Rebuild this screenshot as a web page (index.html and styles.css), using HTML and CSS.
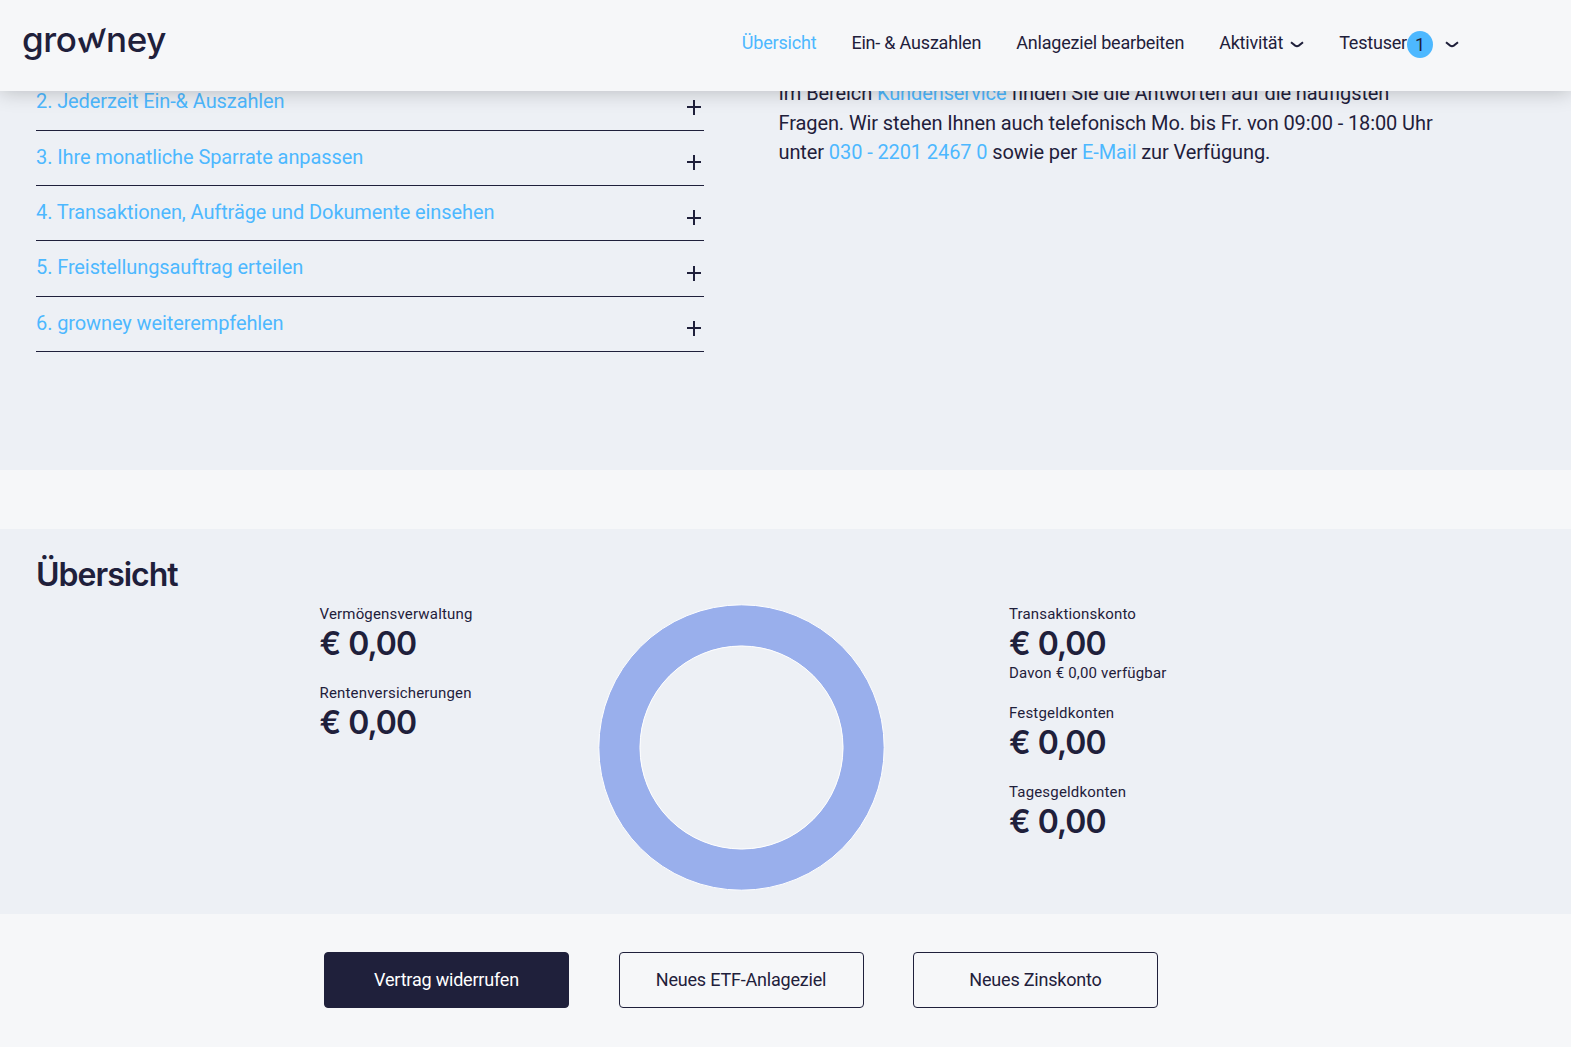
FILE: index.html
```html
<!DOCTYPE html>
<html lang="de">
<head>
<meta charset="utf-8">
<title>growney</title>
<link rel="stylesheet" href="styles.css">
</head>
<body>
<header class="header">
  <a class="logo">gro<span class="logo-w">w</span>ney</a>
  <nav class="nav">
    <a class="nav-item active">Übersicht</a>
    <a class="nav-item">Ein- &amp; Auszahlen</a>
    <a class="nav-item">Anlageziel bearbeiten</a>
    <a class="nav-item">Aktivität<svg class="chevron" viewBox="0 0 14 8"><path d="M1 1.3L5.2 4.6Q7 5.8 8.8 4.6L13 1.3"/></svg></a>
    <a class="nav-item">Testuser<span class="badge">1</span><svg class="chevron user" viewBox="0 0 14 8"><path d="M1 1.3L5.2 4.6Q7 5.8 8.8 4.6L13 1.3"/></svg></a>
  </nav>
</header>
<section class="help">
  <ul class="faq">
    <li><a>2. Jederzeit Ein-&amp; Auszahlen</a><i class="plus"></i></li>
    <li><a>3. Ihre monatliche Sparrate anpassen</a><i class="plus"></i></li>
    <li><a>4. Transaktionen, Aufträge und Dokumente einsehen</a><i class="plus"></i></li>
    <li><a>5. Freistellungsauftrag erteilen</a><i class="plus"></i></li>
    <li><a>6. growney weiterempfehlen</a><i class="plus"></i></li>
  </ul>
  <p class="contact">Im Bereich <a>Kundenservice</a> finden Sie die Antworten auf die häufigsten<br>Fragen. Wir stehen Ihnen auch telefonisch Mo. bis Fr. von 09:00 - 18:00 Uhr<br>unter <a>030 - 2201 2467 0</a> sowie per <a>E-Mail</a> zur Verfügung.</p>
</section>
<section class="overview">
  <h2>Übersicht</h2>
  <div class="overview-grid">
    <div class="accounts">
      <div class="account"><span>Vermögensverwaltung</span><strong>€ 0,00</strong></div>
      <div class="account"><span>Rentenversicherungen</span><strong>€ 0,00</strong></div>
    </div>
    <svg class="donut" viewBox="0 0 287 287"><circle class="ring" cx="143.5" cy="143.5" r="122.2"/><circle class="edge" cx="143.5" cy="143.5" r="142.7"/><circle class="edge" cx="143.5" cy="143.5" r="101.5"/></svg>
    <div class="accounts">
      <div class="account with-note"><span>Transaktionskonto</span><strong>€ 0,00</strong><span>Davon € 0,00 verfügbar</span></div>
      <div class="account"><span>Festgeldkonten</span><strong>€ 0,00</strong></div>
      <div class="account"><span>Tagesgeldkonten</span><strong>€ 0,00</strong></div>
    </div>
  </div>
</section>
<div class="actions">
  <button class="btn primary">Vertrag widerrufen</button>
  <button class="btn">Neues ETF-Anlageziel</button>
  <button class="btn">Neues Zinskonto</button>
</div>
</body>
</html>
```
FILE: styles.css
```css
* { box-sizing: border-box; }
body {
  margin: 0;
  height: 1047px;
  overflow: hidden;
  background: #f6f7f9;
  color: #1f203b;
  font-family: Roboto, sans-serif;
  font-size: 20px;
}
.header {
  position: relative;
  z-index: 2;
  display: flex;
  justify-content: space-between;
  height: 91px;
  padding: 0 112px 0 22px;
  background: #f6f7f9;
  box-shadow: 0 0 20px rgba(0, 0, 0, .24);
}
.logo {
  padding-top: 18px;
  font: 500 35px/42px Inter, sans-serif;
  letter-spacing: -.4px;
}
.logo-w {
  display: inline-block;
  width: 29.5px;
  font-size: 31px;
  font-weight: 540;
  line-height: 20px;
  transform: translateY(-2px) skewY(-21deg) scaleX(1.16);
  transform-origin: 50% 60%;
  text-align: center;
}
.nav {
  display: flex;
  gap: 35px;
  height: 85px;
  align-items: center;
  font-size: 18px;
  letter-spacing: -.2px;
}
.nav-item { display: flex; align-items: center; }
.active { color: #4db8ff; }
.chevron {
  width: 14px;
  height: 8px;
  margin: 4px 0 0 7px;
  fill: none;
  stroke: #1f203b;
  stroke-width: 2;
}
.chevron.user { margin-left: 12px; }
.badge {
  width: 26px;
  height: 27px;
  margin-top: 4px;
  border-radius: 50%;
  background: #4db8ff;
  line-height: 28px;
  text-align: center;
}
.help {
  display: grid;
  grid-template-columns: 668px 1fr;
  column-gap: 74.5px;
  height: 395px;
  margin-top: -16px;
  padding: .4px 36px 0 36px;
  background: #edf0f5;
  letter-spacing: -.1px;
}
.faq { margin: 0; padding: 0; list-style: none; }
.faq li {
  display: flex;
  justify-content: space-between;
  height: 55.33px;
  padding: 12px 3px 0 0;
  border-bottom: 1px solid #1f203b;
  line-height: 29.5px;
}
.help a { color: #4db8ff; }
.plus {
  width: 14px;
  height: 15px;
  margin-top: 12.4px;
  background:
    linear-gradient(#1f203b, #1f203b) center / 2.4px 100% no-repeat,
    linear-gradient(#1f203b, #1f203b) center / 100% 2.4px no-repeat;
}
.contact { margin: 3.7px 0 0; line-height: 29.5px; white-space: nowrap; }
.overview {
  height: 385px;
  margin-top: 59px;
  padding: 26px 36px 0;
  background: #edf0f5;
}
h2 {
  margin: 0;
  font: 600 32px/40px Inter, sans-serif;
  letter-spacing: -1px;
}
.overview-grid {
  display: grid;
  grid-template-columns: 278.3px 411.2px 1fr;
  padding: 5px 0 0 283.5px;
}
.donut { width: 287px; height: 287px; margin: 4px 0 0; }
.ring { fill: none; stroke: #99afec; stroke-width: 41; }
.edge { fill: none; stroke: #fff; stroke-width: 1; }
.account { display: flex; flex-direction: column; height: 79px; line-height: 29.5px; font-size: 15px; letter-spacing: .18px; }
.account.with-note { height: 99px; }
.account strong { font: 600 32px/28px Inter, sans-serif; height: 29.5px; letter-spacing: -1px; word-spacing: 1px; }
.actions { display: flex; gap: 49.5px; padding: 38px 0 0 324px; }
.btn {
  width: 245px;
  height: 56px;
  padding: 0 0 2px;
  border: 1px solid #1f203b;
  border-radius: 4px;
  background: transparent;
  color: #1f203b;
  font: 18px Roboto, sans-serif;
  letter-spacing: -.2px;
}
.primary { background: #1f203b; color: #fff; }
```
